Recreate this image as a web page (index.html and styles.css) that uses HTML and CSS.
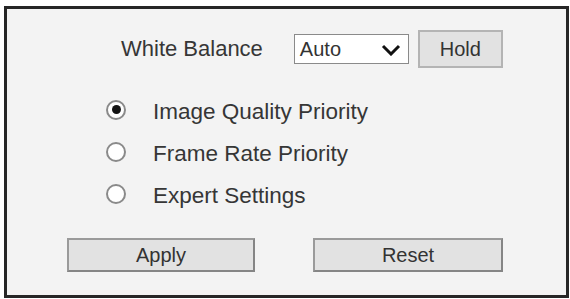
FILE: index.html
```html
<!DOCTYPE html>
<html lang="en">
<head>
    <meta charset="UTF-8">
    <title>Camera Image Settings</title>
    <link rel="stylesheet" href="styles.css">
</head>
<body>
    <div class="panel">
        <div class="wb-row">
            <span class="wb-label">White Balance</span>
            <div class="select">
                <span class="select-value">Auto</span>
                <svg class="chevron" width="20" height="12" viewBox="0 0 20 12">
                    <path d="M2 2 L10 10 L18 2" fill="none" stroke="#111" stroke-width="3"/>
                </svg>
            </div>
            <button class="btn btn-hold">Hold</button>
        </div>

        <div class="modes">
            <label class="mode">
                <span class="radio checked"></span>
                <span class="mode-text">Image Quality Priority</span>
            </label>
            <label class="mode">
                <span class="radio"></span>
                <span class="mode-text">Frame Rate Priority</span>
            </label>
            <label class="mode">
                <span class="radio"></span>
                <span class="mode-text">Expert Settings</span>
            </label>
        </div>

        <div class="actions">
            <button class="btn btn-wide">Apply</button>
            <button class="btn btn-wide btn-reset">Reset</button>
        </div>
    </div>
</body>
</html>
```

FILE: styles.css
```css
body, html {
    margin: 0;
    padding: 0;
    width: 100%;
    height: 100%;
    overflow: hidden;
    background: #ffffff;
    font-family: 'Liberation Sans', Arial, sans-serif;
}
.panel {
    margin: 6px 0 0 4px;
    width: 559px;
    height: 286px;
    border: 3px solid #262626;
    background-color: #f3f3f3;
    color: #363636;
}
.wb-row {
    display: flex;
    align-items: center;
    margin-top: 21px;
    padding-left: 114px;
    height: 38px;
}
.wb-label {
    font-size: 22px;
    margin-right: 31px;
}
.select {
    height: 28px;
    width: 101px;
    border: 1px solid #8a8a8a;
    background-color: #ffffff;
    display: flex;
    align-items: center;
    justify-content: space-between;
    padding: 0 7px 0 5px;
    margin-right: 9px;
}
.select-value {
    font-size: 20px;
    color: #333;
}
.chevron {
    display: block;
    margin-top: 1px;
}
.btn {
    font-family: 'Liberation Sans', Arial, sans-serif;
    font-size: 20px;
    color: #333;
    background-color: #e2e2e2;
    border: 1px solid #8c8c8c;
    padding: 0;
    box-sizing: border-box;
}
.btn-hold {
    width: 85px;
    height: 38px;
    border: 2px solid #b4b4b4;
}
.modes {
    margin-top: 23px;
    padding-left: 99px;
}
.mode {
    display: flex;
    align-items: center;
    height: 42px;
}
.radio {
    width: 20px;
    height: 20px;
    border: 2px solid #8a8a8a;
    border-radius: 50%;
    background-color: #ffffff;
    box-sizing: border-box;
    margin-right: 27px;
    margin-bottom: 5px;
    display: flex;
    align-items: center;
    justify-content: center;
}
.radio.checked::after {
    content: '';
    width: 9px;
    height: 9px;
    border-radius: 50%;
    background-color: #141414;
}
.mode-text {
    font-size: 22.5px;
}
.actions {
    display: flex;
    gap: 58px;
    margin-top: 21px;
    padding-left: 60px;
}
.btn-wide {
    width: 188px;
    height: 34px;
    border: 2px solid #858585;
    border-top-color: #9a9a9a;
    border-left-color: #9a9a9a;
}
.btn-reset {
    width: 190px;
}
```
